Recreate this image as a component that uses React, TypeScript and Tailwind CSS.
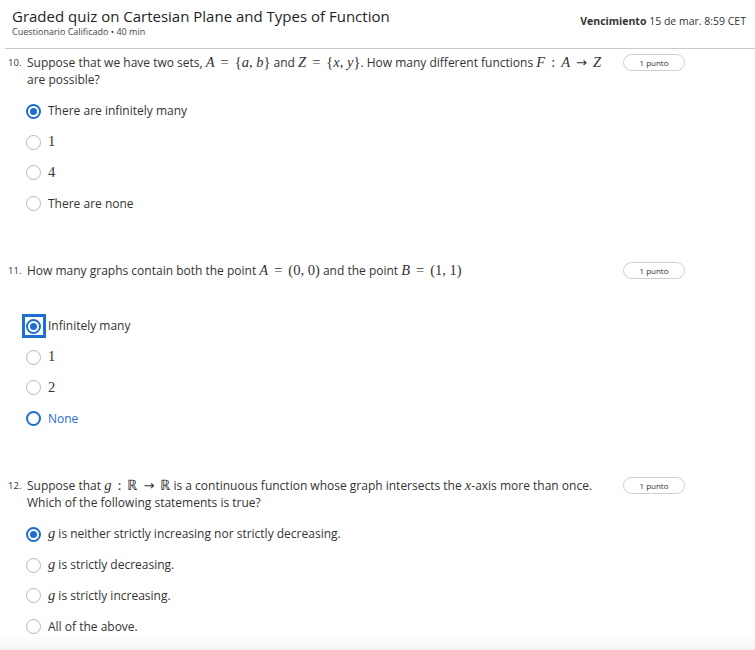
import React from 'react';

type Option = { label: React.ReactNode; state?: 'checked' | 'focused' | 'hover' };

type Question = {
  num: number;
  text: React.ReactNode;
  options: Option[];
  gapTop: string;
  gapOptions: string;
};

// math bits, KaTeX-ish
const M: React.FC<{ children: React.ReactNode }> = ({ children }) => (
  <span className="font-['Liberation_Serif',serif] text-[14.5px] leading-[14px] italic">{children}</span>
);

const R: React.FC<{ children: React.ReactNode }> = ({ children }) => (
  <span className="font-['Liberation_Serif',serif] text-[14.5px] leading-[14px]">{children}</span>
);

// relation with thick space on both sides
const Rel: React.FC<{ children: React.ReactNode; arrow?: boolean }> = ({ children, arrow }) => (
  <span
    className={`mx-[6px] leading-[14px] ${
      arrow ? "font-['DejaVu_Sans',sans-serif] text-[13px]" : "font-['Liberation_Serif',serif] text-[14.5px]"
    }`}
  >
    {children}
  </span>
);

const questions: Question[] = [
  {
    num: 10,
    gapTop: 'mt-[5px]',
    gapOptions: 'mt-[8px]',
    text: (
      <>
        Suppose that we have two sets, <M>A</M><Rel>=</Rel><R>{'{'}</R><M>a</M><R>,&nbsp;</R><M>b</M><R>{'}'}</R> and{' '}
        <M>Z</M><Rel>=</Rel><R>{'{'}</R><M>x</M><R>,&nbsp;</R><M>y</M><R>{'}'}</R>. How many different functions{' '}
        <M>F</M><Rel>:</Rel><M>A</M><Rel arrow>→</Rel><M>Z</M>
        <br />
        are possible?
      </>
    ),
    options: [
      { label: 'There are infinitely many', state: 'checked' },
      { label: <R>1</R> },
      { label: <R>4</R> },
      { label: 'There are none' },
    ],
  },
  {
    num: 11,
    gapTop: 'mt-[43px]',
    gapOptions: 'mt-[32px]',
    text: (
      <>
        How many graphs contain both the point <M>A</M><Rel>=</Rel><R>(0,&nbsp;0)</R> and the point <M>B</M>
        <Rel>=</Rel><R>(1,&nbsp;1)</R>
      </>
    ),
    options: [
      { label: 'Infinitely many', state: 'focused' },
      { label: <R>1</R> },
      { label: <R>2</R> },
      { label: 'None', state: 'hover' },
    ],
  },
  {
    num: 12,
    gapTop: 'mt-[43px]',
    gapOptions: 'mt-[8px]',
    text: (
      <>
        Suppose that <M>g</M><Rel>:</Rel><R>ℝ</R><Rel arrow>→</Rel><R>ℝ</R> is a continuous function whose graph
        intersects the <M>x</M>-axis more than once.
        <br />
        Which of the following statements is true?
      </>
    ),
    options: [
      { label: <><M>g</M> is neither strictly increasing nor strictly decreasing.</>, state: 'checked' },
      { label: <><M>g</M> is strictly decreasing.</> },
      { label: <><M>g</M> is strictly increasing.</> },
      { label: 'All of the above.' },
    ],
  },
];

const Radio: React.FC<{ state?: Option['state'] }> = ({ state }) => {
  if (state === 'checked' || state === 'focused') {
    return (
      <span className="relative flex-shrink-0 w-[15px] h-[15px]">
        {state === 'focused' && (
          <span className="absolute -left-[4.5px] -top-[4.5px] w-[24px] h-[24px] border-[3px] border-[#1d6fd1]"></span>
        )}
        <span className="absolute inset-0 rounded-full border-2 border-[#1f6dd0] flex items-center justify-center">
          <span className="w-[7px] h-[7px] rounded-full bg-[#1f6dd0]"></span>
        </span>
      </span>
    );
  }
  if (state === 'hover') {
    return <span className="flex-shrink-0 w-[15px] h-[15px] rounded-full border-2 border-[#1f6dd0]"></span>;
  }
  return <span className="flex-shrink-0 w-[15px] h-[15px] rounded-full border-[1.5px] border-[#b8b8b8]"></span>;
};

const App: React.FC = () => {
  return (
    <div className="relative w-[755px] h-[650px] overflow-hidden bg-white text-[#333] font-['Open_Sans',sans-serif]">
      <div className="ml-[5px] h-[49px] border-b border-[#c9c9c9] flex items-start justify-between">
        <div className="pl-[7px] pt-[6px]">
          <h1 className="text-[15px] leading-[20px] text-[#1f1f1f]">Graded quiz on Cartesian Plane and Types of Function</h1>
          <p className="text-[9px] leading-[12px] text-[#444]">Cuestionario Calificado • 40 min</p>
        </div>
        <div className="pt-[14px] pr-[9px] text-[10.5px] text-[#333]">
          <span className="font-bold">Vencimiento</span> 15 de mar. 8:59 CET
        </div>
      </div>

      {questions.map((q) => (
        <div key={q.num} className={`${q.gapTop} pl-[8px]`}>
          <div className="flex items-start">
            <span className="w-[19px] text-[9.5px] leading-[17px] flex-shrink-0">{q.num}.</span>
            <p className="w-[584px] text-[12px] leading-[17px] text-[#333]">{q.text}</p>
            <span className="ml-[12px] w-[62px] h-[17px] rounded-full border border-[#cfcfcf] text-[8px] flex items-center justify-center text-[#333]">
              1 punto
            </span>
          </div>
          <div className={`${q.gapOptions} pl-[18px]`}>
            {q.options.map((o, i) => (
              <div key={i} className="h-[30.75px] flex items-center gap-[7px]">
                <Radio state={o.state} />
                <span className={`text-[12px] ${o.state === 'hover' ? 'text-[#1f6dd0]' : 'text-[#333]'}`}>{o.label}</span>
              </div>
            ))}
          </div>
        </div>
      ))}

      <div className="absolute left-0 right-0 bottom-0 h-[16px] bg-gradient-to-b from-white to-[#f4f4f4]"></div>
    </div>
  );
};

export default App;
